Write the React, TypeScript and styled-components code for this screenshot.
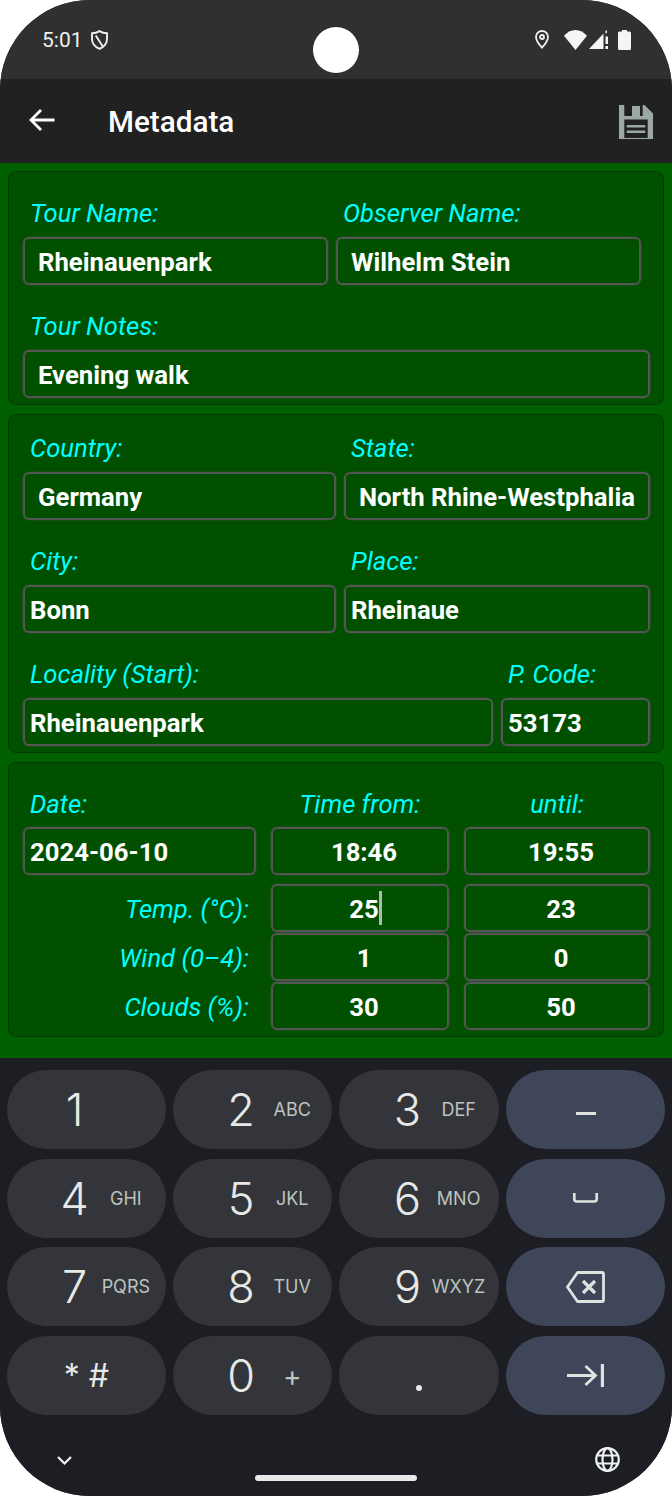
import React from 'react'
import styled, { createGlobalStyle } from 'styled-components'

const GlobalStyle = createGlobalStyle`
  html, body {
    margin: 0;
    padding: 0;
    background: #fff;
  }
  body {
    font-family: Roboto, "Liberation Sans", sans-serif;
  }
`

const keys = [
  { digit: '1', sub: '' },
  { digit: '2', sub: 'ABC' },
  { digit: '3', sub: 'DEF' },
  { digit: '4', sub: 'GHI' },
  { digit: '5', sub: 'JKL' },
  { digit: '6', sub: 'MNO' },
  { digit: '7', sub: 'PQRS' },
  { digit: '8', sub: 'TUV' },
  { digit: '9', sub: 'WXYZ' },
]

const BackIcon = () => (
  <svg width="28" height="28" viewBox="0 0 28 28" fill="none" stroke="#fff" strokeWidth="2.8">
    <path d="M26.500 13H3M13 3L3 13l10 10" />
  </svg>
)

const SaveIcon = () => (
  <SaveSvg width="34" height="34" viewBox="0 0 34 34">
    <path
      fillRule="evenodd"
      fill="#9ca8a3"
      d="M0 0H5.300V11H13V1H21V11H23.700V0H25.500L34 8.500V34H0zM5.300 14.500V33H28.700V14.500zM7.700 20H26.300V22.500H7.700zM7.700 25.500H26.300V28H7.700z"
    />
  </SaveSvg>
)

const ShieldIcon = () => (
  <svg width="17" height="20" viewBox="0 0 17 20" fill="none" stroke="#eef1ee" strokeWidth="1.9">
    <path d="M8.500 1.100C6.200 2.500 3.700 3.200 1 3.300V9c0 4.500 3.200 8 7.500 9.900C12.800 17 16 13.500 16 9V3.300C13.300 3.200 10.800 2.500 8.500 1.100z" />
    <path d="M4.700 5.500l6.800 10.500" />
  </svg>
)

const PinIcon = () => (
  <svg width="14" height="19" viewBox="0 0 14 19" fill="none" stroke="#eef1ee" strokeWidth="1.8">
    <path d="M7 1C3.700 1 1 3.600 1 7c0 3.800 3 7.500 6 10.700C10 14.500 13 10.800 13 7c0-3.400-2.700-6-6-6z" />
    <circle cx="7" cy="7" r="2" />
  </svg>
)

const WifiIcon = () => (
  <svg width="23" height="20" viewBox="0 0 23 20">
    <path fill="#f4f6f4" d="M0 5.800C3 2.300 7 0 11.500 0S20 2.300 23 5.800L11.500 20z" />
  </svg>
)

const SignalIcon = () => (
  <svg width="19" height="19" viewBox="0 0 19 19">
    <path fill="#f4f6f4" d="M0 19L14.500 3.500V19z" />
    <path fill="#f4f6f4" d="M16.500 0.500H18V2.500L16.500 4zM16.500 6.500H19V14H16.500zM16.500 16H19V19H16.500z" />
  </svg>
)

const BatteryIcon = () => (
  <svg width="13" height="20" viewBox="0 0 13 20">
    <path fill="#f4f6f4" d="M4 0h5v1.500h2.500A1.500 1.500 0 0 1 13 3v15.500a1.500 1.500 0 0 1-1.500 1.500h-10A1.500 1.500 0 0 1 0 18.500V3a1.500 1.500 0 0 1 1.500-1.500H4z" />
  </svg>
)

const SpaceIcon = () => (
  <svg width="25" height="10" viewBox="0 0 25 10" fill="none" stroke="#dfe3e0" strokeWidth="2.600">
    <path d="M1.300 0v6a2.500 2.500 0 0 0 2.500 2.500h17.400a2.500 2.500 0 0 0 2.500-2.500V0" />
  </svg>
)

const BackspaceIcon = () => (
  <svg width="39" height="32" viewBox="0 0 39 32" fill="none" stroke="#dfe3e0" strokeWidth="2.800">
    <path d="M11.500 1.500H36a1.500 1.500 0 0 1 1.500 1.500v26a1.500 1.500 0 0 1-1.500 1.500H11.500L1.500 16z" strokeLinejoin="round" />
    <path d="M17 10l12 12M29 10L17 22" strokeWidth="3.200" />
  </svg>
)

const TabIcon = () => (
  <svg width="37" height="23" viewBox="0 0 37 23" fill="none" stroke="#dfe3e0" strokeWidth="2.800">
    <path d="M0 11.500h28.500M18.500 2l10 9.500-10 9.500" />
    <path d="M35.400 0v23" strokeWidth="3.200" />
  </svg>
)

const ChevronIcon = () => (
  <ChevronSvg width="15" height="9" viewBox="0 0 15 9" fill="none" stroke="#f0f2f0" strokeWidth="2.200">
    <path d="M1 1l6.500 6.500L14 1" />
  </ChevronSvg>
)

const GlobeIcon = () => (
  <svg width="25" height="25" viewBox="0 0 25 25" fill="none" stroke="#eef1ee" strokeWidth="2.200">
    <circle cx="12.500" cy="12.500" r="11.300" />
    <ellipse cx="12.500" cy="12.500" rx="5" ry="11.300" />
    <path d="M2 8.500h21M2 16.500h21" />
  </svg>
)

export default function App() {
  return (
    <>
      <GlobalStyle />
      <Phone>
        <StatusBar>
          <StatusGroup>
            <Clock>5:01</Clock>
            <Spacer $w={8} />
            <ShieldIcon />
          </StatusGroup>
          <StatusGroup>
            <PinIcon />
            <Spacer $w={15} />
            <WifiIcon />
            <Spacer $w={2} />
            <SignalIcon />
            <Spacer $w={10} />
            <BatteryIcon />
          </StatusGroup>
          <Camera />
        </StatusBar>
        <AppBar>
          <BackIcon />
          <Title>Metadata</Title>
          <SaveIcon />
        </AppBar>
        <Content>
          <Panel>
            <Row $columns="305px 305px" $gap="8px">
              <Field label="Tour Name:" value="Rheinauenpark" $wide />
              <Field label="Observer Name:" value="Wilhelm Stein" $wide />
            </Row>
            <Row $columns="1fr">
              <Field label="Tour Notes:" value="Evening walk" $wide />
            </Row>
          </Panel>
          <LocationPanel>
            <Row $columns="313px 306px" $gap="8px">
              <Field label="Country:" value="Germany" $wide />
              <Field label="State:" value="North Rhine-Westphalia" $wide />
            </Row>
            <Row $columns="313px 306px" $gap="8px">
              <Field label="City:" value="Bonn" />
              <Field label="Place:" value="Rheinaue" />
            </Row>
            <Row $columns="470px 149px" $gap="8px">
              <Field label="Locality (Start):" value="Rheinauenpark" />
              <Field label="P. Code:" value="53173" />
            </Row>
          </LocationPanel>
          <WeatherPanel>
            <WeatherGrid>
              <HeadLabel>Date:</HeadLabel>
              <HeadLabel $align="center">Time from:</HeadLabel>
              <HeadLabel $align="center">until:</HeadLabel>

              <Input>2024-06-10</Input>
              <Input $center>18:46</Input>
              <Input $center>19:55</Input>

              <RowLabel $first>Temp. (°C):</RowLabel>
              <Input $center $first>
                <CaretText>
                  25
                  <Caret />
                </CaretText>
              </Input>
              <Input $center $first>23</Input>

              <RowLabel>Wind (0–4):</RowLabel>
              <Input $center>1</Input>
              <Input $center>0</Input>

              <RowLabel>Clouds (%):</RowLabel>
              <Input $center>30</Input>
              <Input $center>50</Input>
            </WeatherGrid>
          </WeatherPanel>
        </Content>
        <Keyboard>
          <KeyGrid>
            {keys.slice(0, 3).map((k) => (
              <DigitKey key={k.digit} digit={k.digit} sub={k.sub} />
            ))}
            <FnKey>
              <Dash />
            </FnKey>
            {keys.slice(3, 6).map((k) => (
              <DigitKey key={k.digit} digit={k.digit} sub={k.sub} />
            ))}
            <FnKey>
              <SpaceIcon />
            </FnKey>
            {keys.slice(6, 9).map((k) => (
              <DigitKey key={k.digit} digit={k.digit} sub={k.sub} />
            ))}
            <FnKey>
              <BackspaceIcon />
            </FnKey>
            <Key>
              <Symbols>* #</Symbols>
            </Key>
            <DigitKey digit="0" sub="+" />
            <Key>
              <Dot />
            </Key>
            <FnKey>
              <TabIcon />
            </FnKey>
          </KeyGrid>
          <NavRow>
            <ChevronIcon />
            <HomePill />
            <GlobeIcon />
          </NavRow>
        </Keyboard>
      </Phone>
    </>
  )
}

const Field = ({ label, value, $wide }: { label: string; value: string; $wide?: boolean }) => (
  <FieldBox>
    <Label>{label}</Label>
    <Input $wide={$wide}>{value}</Input>
  </FieldBox>
)

const DigitKey = ({ digit, sub }: { digit: string; sub: string }) => (
  <Key>
    <Digit>{digit}</Digit>
    <Sub $large={sub === '+'}>{sub}</Sub>
  </Key>
)

const Phone = styled.div`
  position: relative;
  width: 672px;
  height: 1496px;
  display: flex;
  flex-direction: column;
  overflow: hidden;
  border-radius: 90px;
  background: #1c1e24;
`

const StatusBar = styled.div`
  position: relative;
  height: 79px;
  flex: none;
  display: flex;
  align-items: center;
  justify-content: space-between;
  padding: 0 41px 0 42px;
  box-sizing: border-box;
  background: #303030;
`

const StatusGroup = styled.div`
  display: flex;
  align-items: center;
  color: #eef1ee;
`

const Spacer = styled.div<{ $w: number }>`
  width: ${(p) => p.$w}px;
`

const Clock = styled.span`
  font-size: 21px;
  line-height: 24px;
`

const Camera = styled.div`
  position: absolute;
  left: 313px;
  top: 27px;
  width: 46px;
  height: 46px;
  border-radius: 50%;
  background: #fff;
`

const AppBar = styled.div`
  height: 84px;
  flex: none;
  display: flex;
  align-items: center;
  padding: 0 19px 0 28px;
  box-sizing: border-box;
  background: #212121;
`

const SaveSvg = styled.svg`
  margin-top: 2px;
`

const Title = styled.div`
  flex: 1;
  margin-left: 52px;
  font-size: 29.700px;
  font-weight: 500;
  color: #fff;
`

const Content = styled.div`
  height: 895px;
  flex: none;
  display: flex;
  flex-direction: column;
  gap: 9px;
  padding: 8px;
  box-sizing: border-box;
  background: #006000;
`

const Panel = styled.div`
  display: flex;
  flex-direction: column;
  padding: 0 13px 6px 14px;
  border: 1px solid #003a00;
  border-radius: 8px;
  background: #005000;
`

const LocationPanel = styled(Panel)`
  & > div:first-child {
    padding-top: 19px;
  }
`

const WeatherPanel = styled(Panel)`
  padding-top: 28px;
`

const Row = styled.div<{ $columns: string; $gap?: string }>`
  display: grid;
  grid-template-columns: ${(p) => p.$columns};
  gap: ${(p) => p.$gap || '0'};
  padding-top: 27px;
`

const FieldBox = styled.div`
  display: flex;
  flex-direction: column;
  gap: 11px;
`

const Label = styled.div<{ $align?: string }>`
  height: 27px;
  padding: 0 7px;
  font-size: 25.600px;
  font-style: italic;
  line-height: 29px;
  color: #00ffff;
  white-space: nowrap;
  text-align: ${(p) => p.$align || 'left'};
`

const HeadLabel = styled(Label)`
  margin-bottom: 8px;
  line-height: 27px;
`

const RowLabel = styled(Label)<{ $first?: boolean }>`
  align-self: center;
  text-align: right;
  padding: 0 7px 0 0;
  margin-top: ${(p) => (p.$first ? '8px' : '0')};
`

const Input = styled.div<{ $wide?: boolean; $center?: boolean; $first?: boolean }>`
  display: flex;
  align-items: center;
  justify-content: ${(p) => (p.$center ? 'center' : 'flex-start')};
  height: 48px;
  margin-top: ${(p) => (p.$first ? '8px' : '0')};
  padding: ${(p) => (p.$center ? '2px 0 0 8px' : p.$wide ? '2px 13px 0' : '2px 5px 0')};
  box-sizing: border-box;
  border: 2px solid #555;
  border-radius: 6px;
  box-shadow: 0 0 0 0.5px rgba(85, 85, 85, 0.5);
  font-size: 25.700px;
  font-weight: 700;
  color: #fff;
  white-space: nowrap;
`

const WeatherGrid = styled.div`
  display: grid;
  grid-template-columns: 233px 178px 186px;
  column-gap: 15px;
  row-gap: 1px;
`

const CaretText = styled.span`
  position: relative;
`

const Caret = styled.span`
  position: absolute;
  left: 100%;
  top: -3px;
  width: 3px;
  height: 34px;
  background: #b0b8b0;
`

const Keyboard = styled.div`
  flex: 1;
  display: flex;
  flex-direction: column;
  padding: 12px 6.700px 0;
  background: #1c1e24;
`

const KeyGrid = styled.div`
  display: grid;
  grid-template-columns: repeat(4, 159.300px);
  grid-auto-rows: 79.200px;
  column-gap: 7.100px;
  row-gap: 9.400px;
`

const Key = styled.div`
  display: flex;
  align-items: center;
  justify-content: center;
  border-radius: 40px;
  background: #33353a;
  color: #e6e9e6;
`

const FnKey = styled(Key)`
  background: #3f465a;
`

const Digit = styled.span`
  width: 40px;
  margin-left: 48px;
  flex: none;
  text-align: center;
  font-family: Inter, Roboto, sans-serif;
  font-size: 45px;
  font-weight: 350;
  line-height: 1;
`

const Sub = styled.span<{ $large?: boolean }>`
  flex: 1;
  text-align: center;
  margin-right: 9px;
  margin-top: ${(p) => (p.$large ? '2px' : '0')};
  font-family: Inter, Roboto, sans-serif;
  font-size: ${(p) => (p.$large ? '28px' : '18px')};
  color: #bcc4bf;
`

const Symbols = styled.span`
  font-family: Inter, Roboto, sans-serif;
  font-size: 32px;
  color: #e6e9e6;
`

const Dot = styled.span`
  width: 6px;
  height: 6px;
  margin-top: 26px;
  border-radius: 50%;
  background: #e6e9e6;
`

const Dash = styled.span`
  width: 20px;
  height: 3px;
  margin-top: 7px;
  background: #dfe3e0;
`

const NavRow = styled.div`
  position: relative;
  flex: 1;
  display: flex;
  align-items: flex-start;
  justify-content: space-between;
  padding: 32px 45px 0 50px;
`

const ChevronSvg = styled.svg`
  margin-top: 9px;
`

const HomePill = styled.div`
  position: absolute;
  left: 248.300px;
  top: 60px;
  width: 162px;
  height: 6.500px;
  border-radius: 3px;
  background: #e8e8e8;
`
